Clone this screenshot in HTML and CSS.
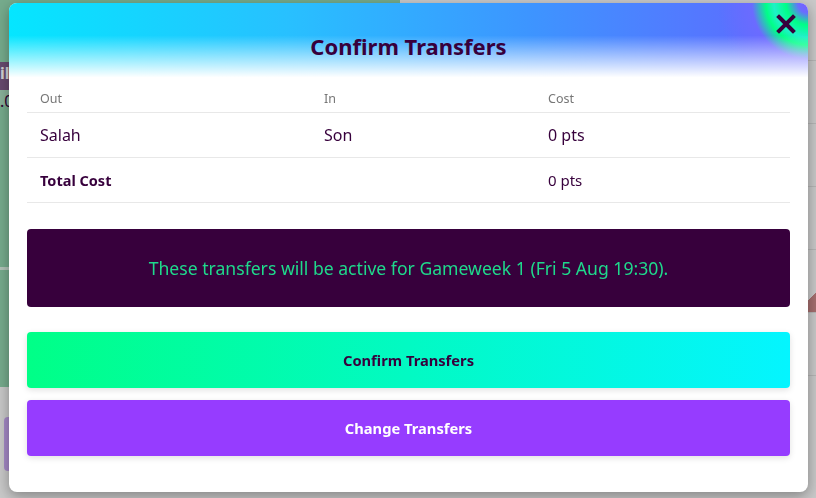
FILE: index.html
```html
<!DOCTYPE html>
<html lang="en">
<head>
  <meta charset="UTF-8">
  <title>Confirm Transfers</title>
  <link rel="stylesheet" href="styles.css">
</head>
<body>
  <div class="page">
    <div class="pitch">
      <div class="tag">il</div>
      <div class="tag-sub">.0</div>
      <div class="pitch-line"></div>
      <div class="bench"><div class="bench-card"></div></div>
    </div>
    <div class="list">
      <div class="list-row"></div>
      <div class="list-row"></div>
      <div class="list-row"></div>
      <div class="list-row flag"></div>
      <div class="list-row"></div>
      <div class="list-row"></div>
    </div>
  </div>

  <div class="backdrop">
    <div class="modal">
      <div class="modal-head">
        <h2>Confirm Transfers</h2>
        <button class="close" aria-label="Close">
          <svg width="20" height="20" viewBox="0 0 20 20"><path d="M3 3L17 17M17 3L3 17" stroke="#37003c" stroke-width="4" stroke-linecap="square"/></svg>
        </button>
      </div>

      <div class="modal-body">
        <table class="transfers">
          <thead>
            <tr><th class="c-out">Out</th><th class="c-in">In</th><th>Cost</th></tr>
          </thead>
          <tbody>
            <tr><td>Salah</td><td>Son</td><td>0 pts</td></tr>
            <tr class="total"><td>Total Cost</td><td></td><td>0 pts</td></tr>
          </tbody>
        </table>

        <div class="notice">These transfers will be active for Gameweek 1 (Fri 5 Aug 19:30).</div>

        <button class="btn btn-confirm">Confirm Transfers</button>
        <button class="btn btn-change">Change Transfers</button>
      </div>
    </div>
  </div>
</body>
</html>
```

FILE: styles.css
```css
body { margin: 0; font-family: "Noto Sans", "Open Sans", sans-serif; color: #37003c; overflow: hidden; }

/* page behind the dialog */
.page { display: flex; height: 498px; background: #f4f4f4; }
.pitch { width: 400px; background: #8fd0ab; display: flex; flex-direction: column; padding-top: 62px; }
.tag { background: #7e5a86; color: #fff; font-weight: bold; height: 28px; width: 60px; }
.tag-sub { background: #a7d8bb; height: 15px; width: 60px; }
.pitch-line { height: 3px; background: #d8eee0; margin-top: 162px; }
.bench { margin-top: 117px; flex: 1; background: #f4f4f4; padding: 30px 0 0 4px; }
.bench-card { width: 60px; height: 54px; border-radius: 4px; background: #c9a8f2; }
.list { flex: 1; display: flex; flex-direction: column; padding-top: 60px; }
.list-row { height: 62px; border-top: 1px solid #ddd; }
.flag { background: linear-gradient(135deg, transparent 96%, #c98686 96%); }

.backdrop { position: fixed; inset: 0; display: flex; padding: 3px 8px 6px 9px; background: rgba(0, 0, 0, 0.18); }
.modal { flex: 1; background: #fff; border-radius: 8px; box-shadow: 0 4px 14px rgba(0, 0, 0, 0.35); overflow: hidden; display: flex; flex-direction: column; }

.modal-head {
  position: relative; height: 81px; display: flex; align-items: center; justify-content: center;
  background:
    linear-gradient(to bottom, rgba(255,255,255,0) 40%, #fff 92%),
    radial-gradient(circle at 100% 0, #7b5cff 0, #6a6cff 10px, #00ff87 22px, #1ff0c8 34px, #00ff87 42px, #6b6bff 56px, rgba(110,100,255,0) 90px),
    linear-gradient(to right, #05e6ff, #28c0ff 35%, #3d95ff 65%, #5a70ff 92%);
}
.modal-head h2 { margin: 4px 0 0; font-size: 22px; font-weight: 700; color: #37003c; }
.close { position: absolute; top: 11px; right: 12px; background: none; border: 0; padding: 0; cursor: pointer; }

.modal-body { padding: 0 18px 36px; display: flex; flex-direction: column; }

.transfers { width: 100%; border-collapse: collapse; }
.transfers th { text-align: left; font-size: 12.5px; font-weight: 400; color: #767676; height: 28px; padding: 0 13px; border-bottom: 1px solid #e8e8e8; }
.transfers td { font-size: 16px; height: 44px; padding: 0 13px; border-bottom: 1px solid #e8e8e8; color: #37003c; }
.c-out { width: 258px; }
.c-in { width: 198px; }
.total td { font-size: 15px; }
.total td:first-child { font-weight: 700; font-size: 14.5px; }

.notice { margin-top: 26px; height: 78px; background: #37003c; border-radius: 4px; color: #1fd98c; font-size: 17.6px; display: flex; align-items: center; justify-content: center; }

.btn { height: 56px; border: 0; border-radius: 4px; font-family: inherit; font-size: 14.7px; font-weight: 700; cursor: pointer; box-shadow: 0 2px 6px rgba(0, 0, 0, 0.12); }
.btn-confirm { margin-top: 25px; background: linear-gradient(to right, #00ff87, #04f5ff); color: #37003c; }
.btn-change { margin-top: 12px; background: #963cff; color: #fff; }
```
